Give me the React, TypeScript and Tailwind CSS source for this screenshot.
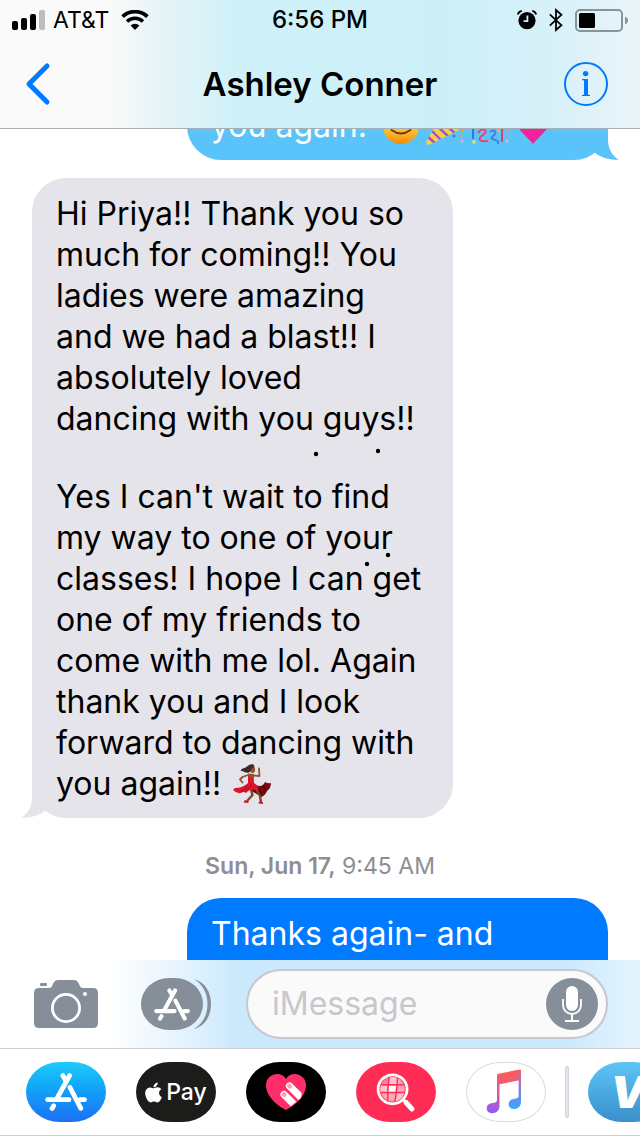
import type { ReactNode } from "react";
import { FaApple } from "react-icons/fa";

type BubbleProps = {
  side: "left" | "right";
  className: string;
  tail?: string;
  children: ReactNode;
};

function Tail({ side, color }: { side: "left" | "right"; color: string }) {
  return (
    <svg
      viewBox="0 0 45 34"
      className={`absolute bottom-0 w-[45px] h-[34px] ${color} ${
        side === "right" ? "-right-[11px]" : "-left-[11px] -scale-x-100"
      }`}
      fill="currentColor"
      aria-hidden="true"
    >
      <path d="M34 0V15C34.5 23 38 30 45 33.7C36 34 27 32 20.5 26.5L14 14Z" />
    </svg>
  );
}

function Bubble({ side, className, tail, children }: BubbleProps) {
  return (
    <div
      className={`relative w-[421px] max-w-full px-6 pt-[15px] pb-[14px] text-[32px] leading-[41px] ${
        side === "right" ? "self-end text-white" : "self-start text-black"
      } ${className}`}
    >
      {tail && <Tail side={side} color={tail} />}
      {children}
    </div>
  );
}

function SignalBars() {
  return (
    <svg viewBox="0 0 33 20" className="w-[33px] h-5" aria-hidden="true">
      <rect x="0" y="11" width="6" height="9" rx="2" />
      <rect x="9" y="8" width="6" height="12" rx="2" />
      <rect x="18" y="4" width="6" height="16" rx="2" />
      <rect x="27" y="0" width="6" height="20" rx="2" fill="#bdbdbd" />
    </svg>
  );
}

function WifiIcon() {
  return (
    <svg viewBox="0 0 28 20" className="w-7 h-5" aria-hidden="true">
      <path d="M1.6 6.6A18 18 0 0 1 26.4 6.6" fill="none" stroke="#000" strokeWidth="3.8" />
      <path d="M6 11.4A11.6 11.6 0 0 1 22 11.4" fill="none" stroke="#000" strokeWidth="3.4" />
      <path d="M14 20L9.6 15.6A6.4 6.4 0 0 1 18.4 15.6Z" />
    </svg>
  );
}

function AlarmIcon() {
  return (
    <svg viewBox="0 0 20 20" className="w-5 h-5" aria-hidden="true">
      <circle cx="10" cy="10.6" r="8.6" />
      <path d="M.8 4.4C1.4 2.4 2.8 1.2 4.8.9M19.2 4.4C18.6 2.4 17.2 1.2 15.2.9" fill="none" stroke="#000" strokeWidth="1.8" />
      <path d="M10.4 5.6V11.2H6.6" fill="none" stroke="#d0f0f8" strokeWidth="1.8" />
    </svg>
  );
}

function BluetoothIcon() {
  return (
    <svg viewBox="0 0 14 24" className="w-[14px] h-6" fill="none" stroke="#000" strokeWidth="1.8" aria-hidden="true">
      <path d="M.8 6.4L12.4 17.2L7 22V2L12.4 6.8L.8 17.6" />
    </svg>
  );
}

function BatteryIcon() {
  return (
    <svg viewBox="0 0 53 23" className="w-[53px] h-[23px]" aria-hidden="true">
      <rect x="1" y="1" width="46" height="21" rx="4" fill="none" stroke="#85959a" strokeWidth="2" />
      <rect x="4" y="4" width="16" height="15" rx="1.5" />
      <path d="M50 7.6C54 9 54 14 50 15.4Z" fill="#85959a" />
    </svg>
  );
}

function SmileEmoji() {
  return (
    <svg viewBox="0 0 36 36" className="w-9 h-9" aria-hidden="true">
      <defs>
        <linearGradient id="face" x1="0" y1="0" x2="0" y2="1">
          <stop offset="0" stopColor="#ffe45c" />
          <stop offset=".7" stopColor="#ffb629" />
          <stop offset="1" stopColor="#ee8a12" />
        </linearGradient>
      </defs>
      <circle cx="18" cy="18" r="18" fill="url(#face)" />
      <path d="M8 14Q11 9 14 14M22 14Q25 9 28 14M8.500 22Q18 29 27.500 22" fill="none" stroke="#6b3a05" strokeWidth="1.8" strokeLinecap="round" />
    </svg>
  );
}

function PopperEmoji() {
  return (
    <svg viewBox="0 0 36 36" className="w-9 h-9 overflow-visible" aria-hidden="true">
      <defs>
        <clipPath id="cone">
          <path d="M-.5 33L14 8Q28 12 32 22L3 36.500Q-1.500 38 -.5 33Z" />
        </clipPath>
      </defs>
      <g clipPath="url(#cone)">
        <rect x="-2" y="6" width="36" height="32" fill="#f8cf3c" />
        <path d="M0 28L9 36M5 23L15 33M9 17L23 30M12 11L30 27" stroke="#9b51d6" strokeWidth="2.400" />
      </g>
      <circle cx="35" cy="23" r="1.500" fill="#f59a3c" />
      <circle cx="27" cy="28" r="1.500" fill="#3b7de0" />
      <circle cx="34" cy="28" r="1.300" fill="#f59a3c" />
      <circle cx="35" cy="33" r="1.500" fill="#f3a5d8" />
      <circle cx="24" cy="6" r="2" fill="#e34f8c" />
    </svg>
  );
}

function ConfettiEmoji() {
  return (
    <svg viewBox="0 0 36 36" className="w-9 h-9 overflow-visible" fill="none" strokeWidth="1.800" aria-hidden="true">
      <path d="M2 12V31" stroke="#2f6fe0" />
      <path d="M7 25C12 18 18 23 12 27S8 34 17 33" stroke="#ee3f6c" />
      <path d="M19 24C25 20 26 25 22 28S22 31 27 33V36" stroke="#3f7fe6" />
      <path d="M31 20L31 34" stroke="#e8325b" />
      <g stroke="none">
        <circle cx="3" cy="34" r="1.700" fill="#f9e05a" />
        <circle cx="36" cy="33" r="1.500" fill="#f3a5d8" />
        <circle cx="28" cy="23" r="1.400" fill="#f3b73c" />
        <circle cx="18" cy="33" r="1.200" fill="#f48a8a" />
        <circle cx="37" cy="24" r="1.500" fill="#f0967c" />
      </g>
    </svg>
  );
}

function HeartEmoji() {
  return (
    <svg viewBox="0 0 36 36" className="w-9 h-9" aria-hidden="true">
      <path d="M18 36C15 32 9 27 5 22C-3 12 4 2 11 3Q16 4 18 9Q20 4 25 3C32 2 39 12 31 22C27 27 21 32 18 36Z" fill="#f0249a" />
    </svg>
  );
}

function DancerEmoji() {
  return (
    <svg viewBox="0 0 40 42" className="w-10 h-[42px]" aria-hidden="true">
      <path d="M21 21Q29 26 32 19Q35 21 38 20Q38 25 34 28Q32 33 28 34Q23 30 18 28Z" fill="#7a0612" />
      <path d="M26 25L28 33M30 23L33 28" stroke="#430409" strokeWidth="1.500" />
      <path d="M18 27L19.500 32L14 38M23 26L27 33L28 39" fill="none" stroke="#7d4527" strokeWidth="2.400" />
      <path d="M15 12L9.500 14L7 16.500L9.500 19.500M20.500 12.500L26.500 13L26 5.500" fill="none" stroke="#8f5430" strokeWidth="1.800" strokeLinejoin="round" strokeLinecap="round" />
      <path d="M15 10.500L21 11L20.500 15L15 15Z" fill="#8f5430" />
      <ellipse cx="19.500" cy="6.500" rx="2.600" ry="3.600" fill="#8f5430" />
      <path d="M20.500 1.500C16 0 14.500 3.500 12.500 4.500S9 5 7.500 8C11 7.500 12 10.500 16 9.500C18 8.500 17.500 5 21.500 3.500Z" fill="#3a2a28" />
      <path d="M15 11L16 15L20 14.500L20.500 11.500L21 20Q27 24 25 28Q18 24 13 30Q10 28 8 30Q4 31 0 27L2 25Q10 25 15 20Z" fill="#e3122b" />
      <path d="M14.500 22Q12 26 8 28.500M18 21Q18 25 13 28" fill="none" stroke="#a60a1c" strokeWidth="1" />
      <path d="M12 37L15.500 38.500V40L10.500 39.500ZM26 38.500L30 39V41L25.500 40.500Z" fill="#d31129" />
    </svg>
  );
}

function CameraIcon() {
  return (
    <svg viewBox="0 0 64 48" className="w-16 h-12" aria-hidden="true">
      <rect x="6" y="3" width="7" height="3" rx="1" fill="#868e99" />
      <path d="M5 8H14C18 8 18 6 19.5 3Q21 0 24 0H40Q43 0 44.500 3C46 6 46 8 50 8H59Q64 8 64 13V43Q64 48 59 48H5Q0 48 0 43V13Q0 8 5 8Z" fill="#868e99" />
      <circle cx="32" cy="28" r="13.6" fill="none" stroke="#fff" strokeWidth="2.8" />
      <circle cx="51" cy="14" r="2" fill="#fff" />
    </svg>
  );
}

function AppStoreGlyph({ className }: { className: string }) {
  return (
    <svg viewBox="19 10 42 38" className={className} fill="none" stroke="#fff" strokeWidth="4.8" strokeLinecap="round" aria-hidden="true">
      <path d="M36.900 12.600L40 18" />
      <path d="M43.600 12.600L31.500 34.500" />
      <path d="M44 24.500L54.800 45.300" />
      <path d="M21.600 36.700H43M54 36.700H58.500" />
      <path d="M27.700 42.700L26 45.500" />
    </svg>
  );
}

function MicIcon() {
  return (
    <svg viewBox="0 0 52 52" className="w-[52px] h-[52px]" aria-hidden="true">
      <circle cx="26" cy="26" r="26" fill="#868e99" />
      <rect x="20" y="8" width="12" height="25" rx="6" fill="#fff" />
      <path d="M17 21V27A9 9 0 0 0 35 27V21" fill="none" stroke="#fff" strokeWidth="1.8" />
      <path d="M26 36V42.500M19 43H33" fill="none" stroke="#fff" strokeWidth="2" />
    </svg>
  );
}

function TouchHeartIcon() {
  return (
    <svg viewBox="0 0 40 36" className="w-10 h-9" aria-hidden="true">
      <defs>
        <clipPath id="touch">
          <path d="M0 0H38.500L35 24L20 36H0Z" />
        </clipPath>
      </defs>
      <path d="M20 36C14 33 0 24 0 11C0 0 15 -4 20 5C25 -4 40 0 40 11C40 24 26 33 20 36Z" fill="#ff2d68" />
      <g clipPath="url(#touch)">
        <g transform="translate(23.500 12) rotate(-45)">
          <rect x="-3.600" y="-3.600" width="7.200" height="24" rx="3.600" fill="#fff" />
          <rect x="-2.200" y="-2.600" width="4.400" height="5.400" rx="2.200" fill="#ff9db6" />
        </g>
        <g transform="translate(18 20.500) rotate(-45)">
          <rect x="-3.600" y="-3.600" width="7.200" height="24" rx="3.600" fill="#fff" />
          <rect x="-2.200" y="-2.600" width="4.400" height="5.400" rx="2.200" fill="#ff9db6" />
        </g>
      </g>
    </svg>
  );
}

function ImagesIcon() {
  return (
    <svg viewBox="0 0 80 60" className="w-20 h-[60px]" aria-hidden="true">
      <defs>
        <clipPath id="globe">
          <circle cx="36.600" cy="27.300" r="12.200" />
        </clipPath>
      </defs>
      <g clipPath="url(#globe)">
        <rect x="24" y="15" width="26" height="26" fill="#ffa3b5" />
        <path d="M34 15H42L41 22H33ZM24 24H32L31 30H24ZM41 31H50V41H40Z" fill="#ffc4cf" />
        <path d="M24 15H33L32 22H24Z" fill="#ff7f98" />
        <path d="M33 24H40L39 30H32Z" fill="#fff" />
        <path d="M24 22.800H50M24 30.500H50M33.500 14Q31 27 32 41M41.500 14Q41 30 38.500 41" fill="none" stroke="#ff2d55" strokeWidth="1.400" />
      </g>
      <circle cx="36.600" cy="27.300" r="14.500" fill="none" stroke="#fff" strokeWidth="2.800" />
      <path d="M47.500 38L50 40.500" stroke="#fff" strokeWidth="3" />
      <path d="M50 40.500L56 47" stroke="#fff" strokeWidth="5" strokeLinecap="round" />
    </svg>
  );
}

function MusicIcon() {
  return (
    <svg viewBox="0 0 80 60" className="w-20 h-[60px]" aria-hidden="true">
      <defs>
        <linearGradient id="noteLeft" gradientUnits="userSpaceOnUse" x1="32" y1="12" x2="24" y2="50">
          <stop offset="0" stopColor="#fb5c5e" />
          <stop offset=".5" stopColor="#d65aa0" />
          <stop offset="1" stopColor="#8f5bff" />
        </linearGradient>
        <linearGradient id="noteRight" gradientUnits="userSpaceOnUse" x1="54" y1="8" x2="50" y2="46">
          <stop offset="0" stopColor="#fb5c5e" />
          <stop offset=".5" stopColor="#8a7bd8" />
          <stop offset="1" stopColor="#38a8ff" />
        </linearGradient>
      </defs>
      <path d="M31 13.500Q31 12 32.500 11.700L50 8.300V18.900L33.500 22.300V44C33.500 49 30 51.200 26 51.200C22.500 51.200 20.700 49 20.700 46.500C20.700 42.500 24 41.300 28 40.700Q31 40.300 31 38Z" fill="url(#noteLeft)" />
      <path d="M49 8.500L54 7.600Q55 7.600 55 9V39.500C55 45 51.500 47 48 47C44.500 47 42.700 45 42.700 42.200C42.700 38.500 46 37 50 36.600Q52.600 36.300 52.600 34V18.400L49 19.100Z" fill="url(#noteRight)" />
    </svg>
  );
}

const pill =
  "flex shrink-0 items-center justify-center w-20 h-[60px] overflow-hidden rounded-[34px/30px]";

export default function App() {
  return (
    <div className="flex flex-col h-screen overflow-hidden bg-white font-['Inter','Liberation_Sans',sans-serif] text-black">
      <header className="shrink-0 border-b border-[#a9b0b3] bg-[linear-gradient(to_right,#fafafa_17%,#e4f3f7_26%,#cff1f9_37%,#cdf0f8_70%,#d9f1f8_88%,#eaf4f9)]">
        <div className="grid grid-cols-[1fr_auto_1fr] items-center h-10 px-3">
          <div className="flex items-center gap-2">
            <SignalBars />
            <span className="text-[23px] leading-7">AT&amp;T</span>
            <span className="pl-1">
              <WifiIcon />
            </span>
          </div>
          <time className="text-[24px] leading-7 font-medium">6:56 PM</time>
          <div className="flex items-center justify-end gap-3">
            <AlarmIcon />
            <BluetoothIcon />
            <BatteryIcon />
          </div>
        </div>
        <div className="grid grid-cols-[1fr_auto_1fr] items-center h-[88px] px-6">
          <button type="button" aria-label="Back" className="justify-self-start">
            <svg viewBox="0 0 28 44" className="w-7 h-11" fill="none" stroke="#007aff" strokeWidth="5" strokeLinecap="round" strokeLinejoin="round">
              <path d="M23 4L5 22L23 40" />
            </svg>
          </button>
          <h1 className="text-[33px] leading-10 font-semibold">Ashley Conner</h1>
          <button type="button" aria-label="Contact details" className="justify-self-end mr-2">
            <svg viewBox="0 0 44 44" className="w-11 h-11">
              <circle cx="22" cy="22" r="21" fill="none" stroke="#007aff" strokeWidth="2" />
              <circle cx="21.600" cy="11.600" r="2.700" fill="#007aff" />
              <path d="M18 17H24V32Q24 33 26 33V34H18V33Q20 33 20 32V19Q20 18 18 18Z" fill="#007aff" />
            </svg>
          </button>
        </div>
      </header>

      <main className="flex-1 min-h-0 overflow-hidden">
        <div className="flex flex-col -mt-[39px] px-8">
          <Bubble side="right" className="rounded-[34px] bg-[#5ac4fa]" tail="text-[#5ac4fa]">
            <div className="flex items-center gap-4">
              <span>you again!</span>
              <span className="flex gap-2">
                <SmileEmoji />
                <PopperEmoji />
                <ConfettiEmoji />
                <HeartEmoji />
              </span>
            </div>
          </Bubble>

          <Bubble side="left" className="mt-[18px] rounded-[34px] bg-[#e5e4ea]" tail="text-[#e5e4ea]">
            <p className="whitespace-pre">
              {"Hi Priya!! Thank you so\nmuch for coming!! You\nladies were amazing\nand we had a blast!! I\nabsolutely loved\ndancing with you guys!!"}
            </p>
            <p className="mt-[37px] whitespace-pre">
              {"Yes I can't wait to find\nmy way to one of your\nclasses! I hope I can get\none of my friends to\ncome with me lol. Again\nthank you and I look\nforward to dancing with"}
            </p>
            <div className="flex items-center gap-3">
              <span>you again!!</span>
              <span className="h-[41px]">
                <DancerEmoji />
              </span>
            </div>
            {/* stray specks around the text */}
            <svg viewBox="0 0 421 640" className="absolute inset-0 w-full h-full" aria-hidden="true">
              <circle cx="284" cy="276" r="2.200" />
              <circle cx="346" cy="273" r="2.200" />
              <circle cx="356" cy="377" r="2.200" />
              <circle cx="335" cy="386" r="2.200" />
            </svg>
          </Bubble>

          <p className="mt-[34px] mb-[18px] text-center text-[23px] leading-7 text-[#8e8e93]">
            <span className="font-semibold">Sun, Jun 17,</span> 9:45 AM
          </p>

          <Bubble side="right" className="rounded-t-[34px] bg-[#007aff]">
            Thanks again- and
          </Bubble>
        </div>
      </main>

      <footer className="shrink-0">
        <div className="flex items-center h-[88px] pl-[34px] pr-8 bg-[linear-gradient(to_right,#ffffff_17%,#e6f4fe_28%,#cae9fd_37%,#cae9fd_88%,#e4f4fe)]">
          <button type="button" aria-label="Camera">
            <CameraIcon />
          </button>
          <button type="button" aria-label="Apps" className="flex items-center ml-[43px]">
            <span className="flex items-center justify-center w-[62px] h-[52px] rounded-[28px/26px] bg-[#868e99]">
              <AppStoreGlyph className="w-9 h-[33px]" />
            </span>
            <svg viewBox="52 0 18 52" className="w-[18px] h-[52px] -ml-[10px]" aria-hidden="true">
              <path d="M53 1C64 4 70 14 70 26C70 38 64 48 53 51C61 46 66.500 38 66.500 26C66.500 14 61 6 53 1Z" fill="#868e99" />
            </svg>
          </button>
          <div className="flex flex-1 min-w-0 items-center h-[70px] ml-[35px] pl-6 pr-2 rounded-full border-2 border-[#c7c7cd] bg-[#fafafa]">
            <input
              type="text"
              aria-label="iMessage"
              placeholder="iMessage"
              className="flex-1 min-w-0 bg-transparent text-[32px] leading-10 outline-none placeholder:text-[#c7c7cd]"
            />
            <button type="button" aria-label="Record audio" className="shrink-0">
              <MicIcon />
            </button>
          </div>
        </div>

        <nav aria-label="iMessage apps" className="flex items-center h-[88px] pl-[26px] border-y border-[#cfcfd2] bg-white overflow-hidden">
          <div className="flex gap-[30px]">
            <button type="button" aria-label="App Store" className={`${pill} bg-linear-to-b from-[#1ecbfb] to-[#1d6ff2]`}>
              <AppStoreGlyph className="w-[42px] h-[38px]" />
            </button>
            <button type="button" className={`${pill} gap-1 bg-[#1c1c1a] text-white`}>
              <FaApple className="w-[17px] h-[23px]" aria-hidden="true" />
              <span className="text-[23px] leading-7 font-medium">Pay</span>
            </button>
            <button type="button" aria-label="Digital Touch" className={`${pill} bg-black`}>
              <TouchHeartIcon />
            </button>
            <button type="button" aria-label="Images" className={`${pill} bg-[#ff2d55]`}>
              <ImagesIcon />
            </button>
            <button type="button" aria-label="Music" className={`${pill} bg-white ring-1 ring-inset ring-[#dcdcdc]`}>
              <MusicIcon />
            </button>
          </div>
          <div className="shrink-0 w-1 h-[52px] mx-[19px] rounded-sm border border-[#d3d3dc] bg-[#e5e5ee]" />
          <button type="button" aria-label="Venmo" className={`${pill} bg-linear-to-b from-[#5dc5f5] to-[#3a8fca] text-white`}>
            <span className="text-[44px] leading-[60px] font-black italic">V</span>
          </button>
        </nav>
      </footer>
    </div>
  );
}
